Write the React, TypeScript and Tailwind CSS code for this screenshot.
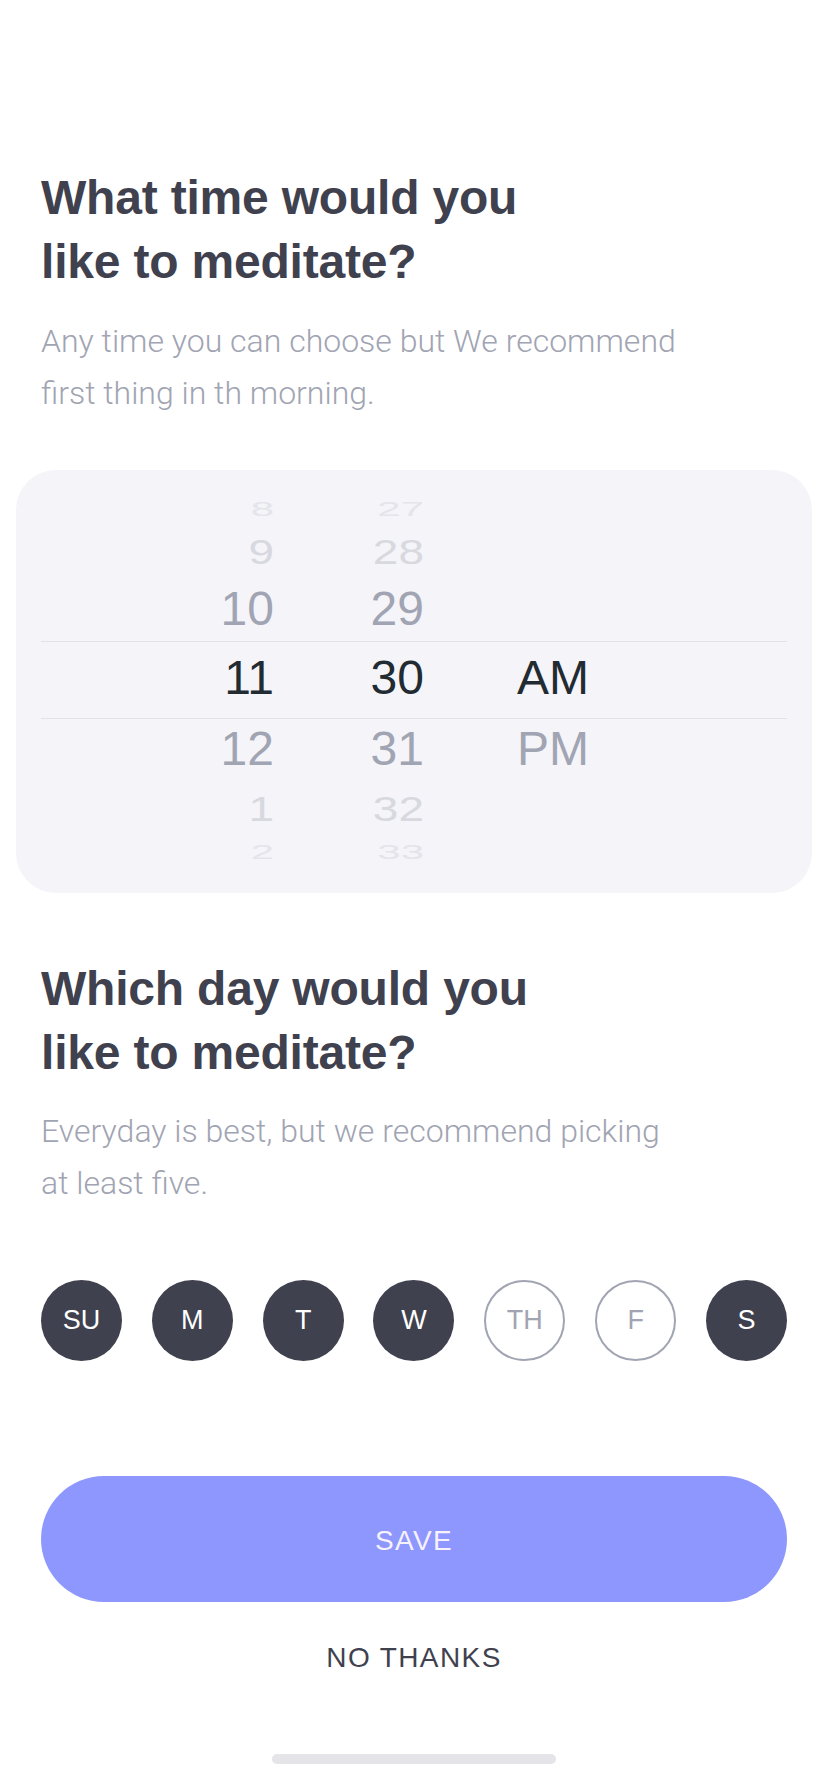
import React from "react";

const hours = ["8", "9", "10", "11", "12", "1", "2"];
const minutes = ["27", "28", "29", "30", "31", "32", "33"];
const periods = ["", "", "", "AM", "PM", "", ""];

// one entry per wheel row: height, inner padding, text look
const rows = [
  { row: "h-[42px]", text: "text-[42px] scale-y-[0.5] text-[#e4e4ea]" },
  { row: "h-[44px]", text: "text-[46px] scale-y-[0.78] text-[#d8d8df]" },
  { row: "h-[67px] pt-[3px]", text: "text-[48px] text-[#a1a4b2]" },
  { row: "h-[78px] pb-[4px] border-y border-[#e2e2e8]", text: "text-[48px] text-[#222b31]" },
  { row: "h-[65px] pb-[5px]", text: "text-[48px] text-[#a1a4b2]" },
  { row: "h-[52px] pb-[2px]", text: "text-[46px] scale-y-[0.78] text-[#d8d8df]" },
  { row: "h-[32px]", text: "text-[42px] scale-y-[0.5] text-[#e4e4ea]" },
];

const days = [
  { label: "SU", on: true },
  { label: "M", on: true },
  { label: "T", on: true },
  { label: "W", on: true },
  { label: "TH", on: false },
  { label: "F", on: false },
  { label: "S", on: true },
];

function TimePicker() {
  return (
    <div className="mx-[16px] mt-[51px] h-[423px] overflow-hidden rounded-[40px] bg-[#f4f4f9] px-[25px] pt-[18px] font-['Liberation_Sans',Arial,sans-serif]">
      {rows.map((r, i) => (
        <div key={i} className={`grid grid-cols-[233px_150px_1fr] grid-rows-[100%] items-center ${r.row}`}>
          <div className="text-right leading-none">
            <span className={`inline-block ${r.text}`}>{hours[i]}</span>
          </div>
          <div className="text-right leading-none">
            <span className={`inline-block ${r.text}`}>{minutes[i]}</span>
          </div>
          <div className="pl-[93px] leading-none">
            <span className={`inline-block ${r.text}`}>{periods[i]}</span>
          </div>
        </div>
      ))}
    </div>
  );
}

function Heading({ children }: { children: React.ReactNode }) {
  return (
    <h1 className="px-[41px] font-['Liberation_Sans',Arial,sans-serif] text-[48px] font-bold leading-[64px] tracking-[-0.2px] text-[#3f414e]">
      {children}
    </h1>
  );
}

function Sub({ children }: { children: React.ReactNode }) {
  return (
    <p className="mt-[21px] px-[41px] font-['Roboto',sans-serif] text-[32px] font-light leading-[52px] text-[#a1a4b2]">
      {children}
    </p>
  );
}

export default function App() {
  return (
    <div className="min-h-[1792px] w-full bg-white pt-[166px]">
      <Heading>
        What time would you
        <br />
        like to meditate?
      </Heading>
      <Sub>
        Any time you can choose but We recommend
        <br />
        first thing in th morning.
      </Sub>

      <TimePicker />

      <div className="mt-[64px]">
        <Heading>
          Which day would you
          <br />
          like to meditate?
        </Heading>
      </div>
      <div className="-mt-px">
        <Sub>
          Everyday is best, but we recommend picking
          <br />
          at least five.
        </Sub>
      </div>

      <div className="mt-[71px] flex justify-between px-[41px] font-['Liberation_Sans',Arial,sans-serif]">
        {days.map((d) => (
          <div
            key={d.label}
            className={
              d.on
                ? "flex h-[81px] w-[81px] items-center justify-center rounded-full bg-[#3f414e] text-[27px] text-white"
                : "flex h-[81px] w-[81px] items-center justify-center rounded-full border-2 border-[#a1a4b2] text-[27px] text-[#a1a4b2]"
            }
          >
            {d.label}
          </div>
        ))}
      </div>

      <div className="mt-[115px] px-[41px]">
        <button className="flex h-[126px] w-full items-center justify-center rounded-full bg-[#8e97fd] pt-[4px] font-['Liberation_Sans',Arial,sans-serif] text-[28px] tracking-[0.05em] text-[#f6f1fb]">
          SAVE
        </button>
      </div>

      <div className="mt-[36px] text-center font-['Liberation_Sans',Arial,sans-serif] text-[28px] leading-[40px] tracking-[0.05em] text-[#3f414e]">
        NO THANKS
      </div>

      <div className="mt-[76px] flex justify-center">
        <div className="h-[10px] w-[284px] rounded-full bg-[#e4e4e9]" />
      </div>
    </div>
  );
}
